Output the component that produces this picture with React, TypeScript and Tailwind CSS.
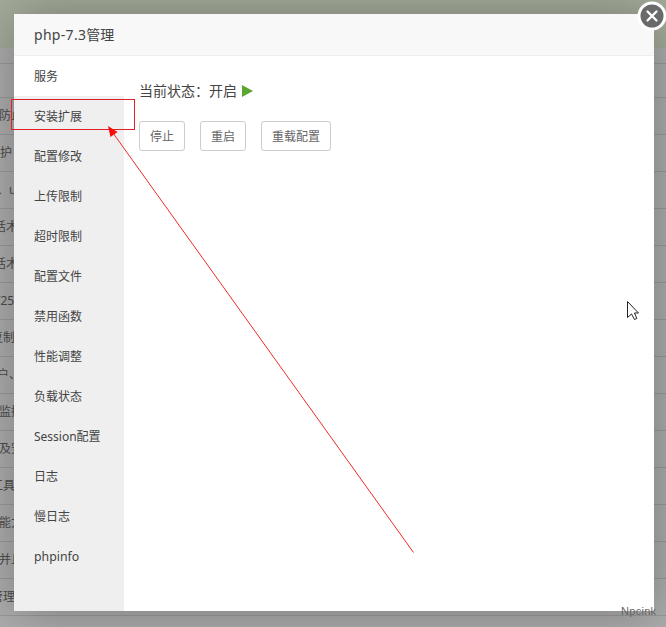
import React from 'react';

const rows = [
  { text: '防止', shift: '-ml-px' },
  { text: '护', shift: 'ml-0' },
  { text: '、u', shift: '-ml-[3px]' },
  { text: '话术', shift: '-ml-[6px]' },
  { text: '话术', shift: '-ml-[6px]' },
  { text: '/25', shift: '-ml-[4px]' },
  { text: '复制', shift: '-ml-[9px]' },
  { text: '户、', shift: '-ml-[3px]' },
  { text: '监控', shift: '-ml-px' },
  { text: '及安', shift: '-ml-px' },
  { text: '工具', shift: '-ml-[9px]' },
  { text: '能力', shift: '-ml-px' },
  { text: '并且', shift: '-ml-px' },
  { text: '管理', shift: '-ml-[9px]' },
];

const menu = [
  '服务', '安装扩展', '配置修改', '上传限制', '超时限制', '配置文件', '禁用函数',
  '性能调整', '负载状态', 'Session配置', '日志', '慢日志', 'phpinfo',
];

function Backdrop() {
  return (
    <div className="flex h-full w-full flex-col bg-[#adadad]">
      <div className="h-12 shrink-0 bg-[#a5ac9b]" />
      <div className="h-4 shrink-0 border-b border-[#999]" />
      <div className="h-[34px] shrink-0 border-b border-[#999]" />
      {rows.map((row, i) => (
        <div
          key={i}
          className="flex h-[37px] shrink-0 items-center border-b border-[#999] text-xs whitespace-nowrap text-[#4c4c4c]"
        >
          <span className={row.shift}>{row.text}</span>
        </div>
      ))}
    </div>
  );
}

function ActionButton({ children, width }: { children: React.ReactNode; width: string }) {
  return (
    <button
      className={`flex h-[30px] items-center justify-center rounded-[3px] border border-[#ccc] bg-white pt-[2px] text-xs text-[#666] ${width}`}
    >
      {children}
    </button>
  );
}

function Dialog() {
  return (
    <section className="absolute top-[14px] left-[14px] flex h-[597px] w-[640px] flex-col bg-white shadow-[1px_1px_50px_rgba(0,0,0,0.3)]">
      <header className="flex h-[42px] shrink-0 items-center border-b border-[#eee] bg-[#f8f8f8] pl-5 text-sm text-[#444]">
        <span className="tracking-[0.3px]">php-7.3</span>
        <span>管理</span>
      </header>
      <div className="flex min-h-0 flex-1">
        <nav className="flex w-[110px] shrink-0 flex-col bg-[#efefef] text-xs text-[#444]">
          {menu.map((item, i) => (
            <div
              key={item}
              className={`flex h-10 shrink-0 items-center pt-[2px] pl-5 whitespace-nowrap ${i === 0 ? 'bg-white' : ''} ${
                item === 'phpinfo' ? 'text-[12.3px]' : ''
              }`}
            >
              {item}
            </div>
          ))}
        </nav>
        <main className="flex-1 pt-[25px] pl-[15px]">
          <div className="flex h-5 items-center text-sm text-[#444]">
            <span>当前状态：开启</span>
            <svg className="ml-[5px]" width="11" height="12" viewBox="0 0 11 12">
              <path d="M0 0L11 6L0 12Z" fill="#5ca532" />
            </svg>
          </div>
          <div className="mt-5 flex gap-[15px]">
            <ActionButton width="w-[46px]">停止</ActionButton>
            <ActionButton width="w-[46px]">重启</ActionButton>
            <ActionButton width="w-[70px]">重载配置</ActionButton>
          </div>
        </main>
      </div>
    </section>
  );
}

export default function App() {
  return (
    <div className="relative h-[627px] w-[666px] overflow-hidden font-['Noto_Sans','Noto_Sans_CJK_SC',sans-serif]">
      <Backdrop />
      <Dialog />
      <svg className="absolute top-0 left-[636px]" width="30" height="32" viewBox="0 0 30 32">
        <circle cx="16" cy="16" r="13" fill="#6a6a6a" stroke="#fff" strokeWidth="3" />
        <path d="M11.5 11.5L20.5 20.5M20.5 11.5L11.5 20.5" stroke="#fff" strokeWidth="2.3" strokeLinecap="round" />
      </svg>
      <div className="absolute top-[99px] left-[11px] h-[31px] w-[124px] border border-[#e02024]" />
      <svg className="absolute top-0 left-0" width="666" height="627" viewBox="0 0 666 627">
        <path d="M113 133L413.500 552.500" stroke="#f02a2a" strokeWidth="1" />
        <path d="M108 126L117.500 132L110.500 137Z" fill="#ff0808" />
        <path
          d="M627.500 301.500V317.500L631.500 314L634.500 319.500L636.800 318.500L634.500 313H638.500Z"
          fill="#fff"
          stroke="#222"
          strokeWidth="1"
        />
      </svg>
      <span className="absolute top-[603px] left-[621px] font-['Liberation_Sans',sans-serif] text-[11px] leading-4 tracking-[0.3px] text-[#666]">
        Npcink
      </span>
    </div>
  );
}
